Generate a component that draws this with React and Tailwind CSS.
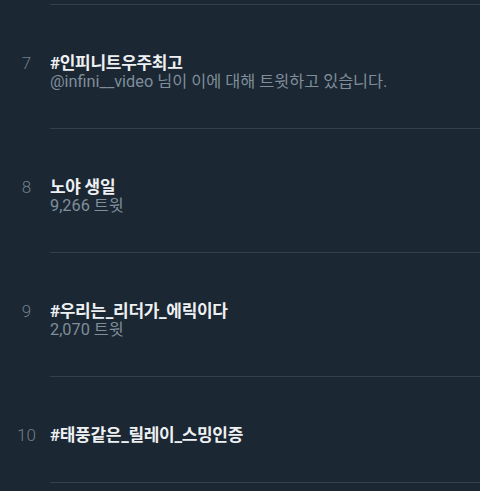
const trends = [
  { rank: 7, title: '#인피니트우주최고', meta: '@infini__video 님이 이에 대해 트윗하고 있습니다.' },
  { rank: 8, title: '노야 생일', meta: '9,266 트윗' },
  { rank: 9, title: '#우리는_리더가_에릭이다', meta: '2,070 트윗' },
  { rank: 10, title: '#태풍같은_릴레이_스밍인증' },
]

const font = { fontFamily: 'Roboto, "Noto Sans CJK KR", sans-serif' }

export default function App() {
  return (
    <div className="w-[480px] h-[491px] overflow-hidden bg-[#1b2733]" style={font}>
      {/* tail of the row above */}
      <div className="h-[5px] ml-[50px] border-b border-[#34414c]" />

      {trends.map((t) => (
        <div key={t.rank} className="flex">
          <div className="w-[50px] pl-[3px] pt-[49px] text-center text-[17px] leading-[19px] font-light text-[#6f7f8b]">
            {t.rank}
          </div>
          <div
            className={`flex-1 pt-[49px] border-b border-[#34414c] ${t.meta ? 'pb-[38px]' : 'pb-[37px]'}`}
          >
            <div className="text-[17px] leading-[19px] font-bold text-[#eef0f2] tracking-[-0.3px]">
              {t.title}
            </div>
            {t.meta && (
              <div className="text-[16.3px] leading-[17px] text-[#7f8e9a]">{t.meta}</div>
            )}
          </div>
        </div>
      ))}
    </div>
  )
}
